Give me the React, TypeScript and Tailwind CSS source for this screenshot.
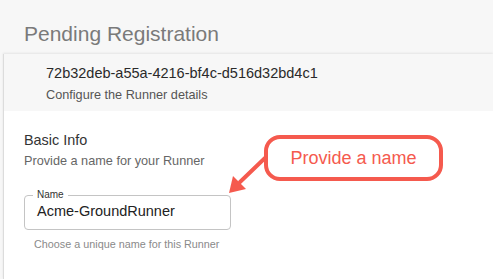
const App = () => {
  return (
    <div
      className="relative w-[493px] h-[279px] overflow-hidden bg-[#f7f7f7]"
      style={{ fontFamily: '"Liberation Sans", Arial, sans-serif' }}
    >
      <h1 className="pl-[24px] pt-[22px] h-[54px] text-[21px] leading-[24px] text-[#7a7a7a]">
        Pending Registration
      </h1>
      <div className="ml-[3px] border-l border-[#dcdcdc] shadow-[0_-1px_2px_rgba(0,0,0,0.08)] h-[225px]">
        <div className="bg-[#f7f7f7] h-[57px] pl-[42px] pt-[10px]">
          <div className="text-[14.5px] leading-[18px] text-[#2a2a2a]">
            72b32deb-a55a-4216-bf4c-d516d32bd4c1
          </div>
          <div className="mt-[5px] text-[12.7px] leading-[16px] text-[#555]">
            Configure the Runner details
          </div>
        </div>
        <div className="bg-white h-[168px] pl-[20px] pt-[20px]">
          <div className="text-[14.4px] leading-[18px] text-[#333]">Basic Info</div>
          <div className="mt-[4px] text-[12.7px] leading-[16px] text-[#666]">
            Provide a name for your Runner
          </div>
          <fieldset className="mt-[21px] w-[207px] h-[40px] border border-[#c4c4c4] rounded-[4px] px-[8px] pb-0 pt-0">
            <legend className="px-[4px] text-[10px] leading-[10px] text-[#333]">Name</legend>
            <div className="pl-[4px] mt-[1px] text-[14.5px] leading-[20px] text-[#222]">
              Acme-GroundRunner
            </div>
          </fieldset>
          <div className="mt-[8px] pl-[10px] text-[10.8px] leading-[12px] text-[#8a8a8a]">
            Choose a unique name for this Runner
          </div>
        </div>
      </div>

      {/* callout annotation */}
      <div className="absolute left-[264px] top-[135px] w-[179px] h-[46px] border-[4px] border-[#f55a4e] rounded-[16px] bg-white flex items-center justify-center">
        <span className="text-[18px] leading-[20px] text-[#f55a4e]">Provide a name</span>
      </div>
      <svg className="absolute left-0 top-0" width="493" height="279">
        <line x1="265" y1="158" x2="240" y2="182" stroke="#f55a4e" strokeWidth="4" strokeLinecap="round" />
        <polygon points="229,193 233,176 246,189" fill="#f55a4e" />
      </svg>
    </div>
  );
};

export default App;
